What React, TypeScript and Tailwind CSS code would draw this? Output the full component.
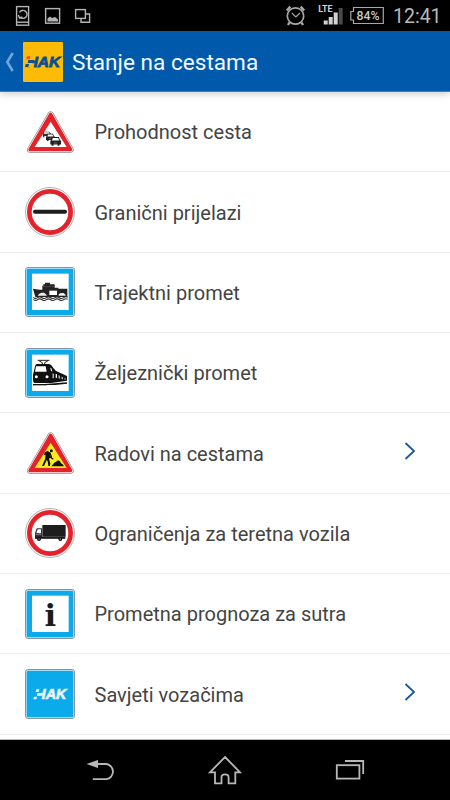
import React, { FC, ReactNode } from "react";

interface MenuItem {
  label: string;
  icon: ReactNode;
  hasArrow?: boolean;
}

interface SignProps {
  children?: ReactNode;
}

const Sign: FC<SignProps> = ({ children }) => (
  <svg viewBox="0 0 150 150" className="h-[50px] w-[50px] shrink-0">
    {children}
  </svg>
);

const TriangleSign: FC<SignProps & { fill: string }> = ({ children, fill }) => (
  <Sign>
    <path d="M77 22 L137 128 H15 Z" fill="#fff" stroke="#8b8b8b" strokeWidth="18" strokeLinejoin="round" />
    <path d="M77 22 L137 128 H15 Z" fill="#fff" stroke="#fff" strokeWidth="14" strokeLinejoin="round" />
    <path d="M77 22 L137 128 H15 Z" fill="#e5212a" stroke="#e5212a" strokeWidth="10" strokeLinejoin="round" />
    <path d="M77 44 L125 120 H29 Z" fill={fill} />
    {children}
  </Sign>
);

const CircleSign: FC<SignProps> = ({ children }) => (
  <Sign>
    <circle cx="75" cy="75" r="73.5" fill="#fff" stroke="#8b8b8b" strokeWidth="2" />
    <circle cx="75" cy="75" r="62" fill="#fff" stroke="#e5212a" strokeWidth="14" />
    {children}
  </Sign>
);

const SquareSign: FC<SignProps & { solid?: boolean }> = ({ children, solid }) => (
  <Sign>
    <rect x="1.5" y="1.5" width="147" height="147" rx="8" fill="#d5edf8" stroke="#6f7f88" strokeWidth="2.5" />
    <rect x="5" y="5" width="140" height="140" rx="5" fill="#0baaea" />
    {!solid && <rect x="21" y="20" width="110" height="109" fill="#fff" />}
    {children}
  </Sign>
);

const Car: FC<{ transform: string }> = ({ transform }) => (
  <g transform={transform}>
    <path d="M5 0 H27 L31 11 H34 V24 H29 V28 H23 V24 H10 V28 H4 V24 H0 V11 H2 Z" fill="#222" />
    <path d="M8 3 H25 L28 11 H5 Z" fill="#fff" />
    <path d="M11 19 H22" stroke="#888" strokeWidth="2" />
  </g>
);

const TrafficIcon = () => (
  <TriangleSign fill="#fff">
    <path d="M53 80 L56 74 H72 L78 80 V87 H74 V91 H70 V87 H58 V91 H54 Z" fill="#333" />
    <path d="M57 76 H71 L75 80 H56 Z" fill="#fff" />
    <Car transform="translate(63 80) scale(.78)" />
    <Car transform="translate(76 90) scale(.95)" />
  </TriangleSign>
);

const BorderIcon = () => (
  <CircleSign>
    <path d="M30 74 H120" stroke="#1d1d1d" strokeWidth="12" strokeLinecap="round" />
  </CircleSign>
);

const FerryIcon = () => (
  <SquareSign>
    <path d="M24 65 L44 68 H52 V56 H55 V52 H60 V47 H75 V52 H89 V62 H100 V65 H127 V90 H31 Z" fill="#222" />
    <path d="M55 59 H87" stroke="#555" strokeWidth="2" />
    <rect x="73" y="71" width="23" height="13" fill="#fff" />
    <path d="M38 86 L42 81 L49 77 H57 L62 81 L66 86 Z" fill="#eee" />
    <path d="M101 86 V82 L107 78 H116 L122 84 V86 Z" fill="#eee" />
    <path
      d="M25 91 Q32 97 38 92 T51 92 T64 92 T77 92 T90 92 T103 92 T116 92 T128 91 M25 97 Q32 103 38 98 T51 98 T64 98 T77 98 T90 98 T103 98 T116 98 T128 97"
      fill="none"
      stroke="#333"
      strokeWidth="3.5"
    />
  </SquareSign>
);

const TrainIcon = () => (
  <SquareSign>
    <path d="M38 37 H73 M42 38 L53 45 L50 49 M69 38 L58 45 L61 49" fill="none" stroke="#222" strokeWidth="3" />
    <path d="M31 52 Q32 48 38 48 H72 Q79 49 83 57 L92 68 L126 84 V98 L79 105 H28 Q24 103 24 95 V80 Z" fill="#111" />
    <path d="M33 55 H62 L65 71 H30 Z" fill="#fff" />
    <circle cx="34" cy="86" r="4.5" fill="#fff" />
    <circle cx="66" cy="86" r="4.5" fill="#fff" />
    <path d="M76 59 L79 60 L82 70 H78 Z M83 76 L86 77 V91 L83 90 Z M92 78 L96 79 V90 L92 89 Z M101 82 L104 83 V92 L101 91 Z M110 86 L113 87 V94 L110 93 Z M119 89 L121 90 V95 L119 95 Z" fill="#fff" />
    <path d="M24 110 H66" fill="none" stroke="#111" strokeWidth="4" />
    <path d="M48 109 L90 106 L126 103 V107 L90 111 H60 Z" fill="#111" />
  </SquareSign>
);

const RoadworksIcon = () => (
  <TriangleSign fill="#fbec21">
    <circle cx="79" cy="68" r="4.5" fill="#111" />
    <path d="M59 73 L68 69 L77 74 L77 86 L72 93 L76 106 L75 114 H70 L68 100 L65 96 L57 114 H51 L60 94 L62 79 L57 82 Z" fill="#111" />
    <path d="M61 77 L85 94 M76 77 L80 88" stroke="#111" strokeWidth="3.5" fill="none" />
    <path d="M79 115 L88 104 L93 101 L99 97 L105 100 L108 106 L113 109 L117 115 Z" fill="#111" />
  </TriangleSign>
);

const TruckIcon = () => (
  <CircleSign>
    <rect x="52" y="51" width="70" height="35" fill="#1d1d1d" />
    <path d="M30 90 V75 L35 61 H51 V90 Z" fill="#333" />
    <path d="M34 75 L38 64 H48 V76 Z" fill="#fff" />
    <path d="M32 79 H48" stroke="#aaa" strokeWidth="2" />
    <path d="M30 89 H121" stroke="#1d1d1d" strokeWidth="7" />
    <circle cx="42" cy="93" r="6" fill="#111" />
    <circle cx="106" cy="93" r="6" fill="#111" />
    <circle cx="42" cy="93" r="2" fill="#999" />
    <circle cx="106" cy="93" r="2" fill="#999" />
  </CircleSign>
);

const InfoIcon = () => (
  <SquareSign>
    <text x="76" y="111" textAnchor="middle" fill="#1b1b1b" className="font-['DejaVu_Serif',serif] text-[92px] font-bold">
      i
    </text>
  </SquareSign>
);

const AdviceIcon = () => (
  <SquareSign solid>
    <text x="31" y="91" textLength="93" lengthAdjust="spacingAndGlyphs" fill="#e9f6fd" stroke="#e9f6fd" strokeWidth="2" className="font-['Liberation_Sans',sans-serif] text-[42px] font-bold italic">
      HAK
    </text>
    <path d="M30 58 H50 L48 73 H38 L37 80 H44 L42 93 H26 Z" fill="#0baaea" />
    <path d="M34 61 H43 L41 69 H32 Z M38 72 H52 L51 80 H36 Z M27 83 H36 L34 91 H25 Z" fill="#e9f6fd" />
  </SquareSign>
);

const HakLogo = () => (
  <svg viewBox="0 0 120 120" className="h-10 w-10 shrink-0">
    <rect width="120" height="120" rx="3" fill="#fdbb05" />
    <text x="11" y="75" textLength="101" lengthAdjust="spacingAndGlyphs" fill="#0b4f94" stroke="#0b4f94" strokeWidth="2.5" className="font-['Liberation_Sans',sans-serif] text-[44px] font-bold italic">
      HAK
    </text>
    <path d="M10 40 H31 L25 77 H6 Z" fill="#fdbb05" />
    <path d="M12 43 H22 L20 52 H10 Z" fill="#f04d23" />
    <path d="M16 54 H33 L31 63 H14 Z M8 66 H18 L16 75 H6 Z" fill="#0b4f94" />
  </svg>
);

const menuItems: MenuItem[] = [
  { label: "Prohodnost cesta", icon: <TrafficIcon /> },
  { label: "Granični prijelazi", icon: <BorderIcon /> },
  { label: "Trajektni promet", icon: <FerryIcon /> },
  { label: "Željeznički promet", icon: <TrainIcon /> },
  { label: "Radovi na cestama", icon: <RoadworksIcon />, hasArrow: true },
  { label: "Ograničenja za teretna vozila", icon: <TruckIcon /> },
  { label: "Prometna prognoza za sutra", icon: <InfoIcon /> },
  { label: "Savjeti vozačima", icon: <AdviceIcon />, hasArrow: true },
];

const StatusBar = () => (
  <div className="flex h-[31px] shrink-0 items-center justify-between bg-black text-[#b9b9b9]">
    <svg viewBox="0 0 100 31" className="h-[31px] w-[100px]" fill="none" stroke="#b4b4b4" strokeWidth="1.4">
      <rect x="16.6" y="6.6" width="12" height="18.6" />
      <path d="M17 22.2 H28.5" />
      <path d="M19.5 12.5 A4 4 0 1 1 20 17 M18.3 15 L19.6 18 L22.4 16.8" />
      <rect x="45.6" y="8.6" width="14" height="14.6" />
      <path d="M47.5 21.5 V18.5 L50 16.5 L52 18 L55 17 L58 19.5 V21.5 Z" fill="#b4b4b4" stroke="none" />
      <path d="M86 14 H89.6 V22.3 H81 V19" />
      <rect x="75.6" y="9.6" width="9.8" height="8.8" />
    </svg>
    <div className="flex items-center">
      <svg viewBox="0 0 108 31" className="h-[31px] w-[108px]" fill="none">
        <g stroke="#a8a8a8" strokeWidth="1.7">
          <circle cx="11.5" cy="16" r="8.2" />
          <path d="M11.8 17 L7.8 12.8 M11.8 17 L16 13" strokeWidth="1.2" />
          <path d="M2.8 10.5 L6.3 6.6 M16.7 6.6 L20.2 10.5 M5.5 22.5 L4 25 M17.5 22.5 L19 25" strokeWidth="2.4" />
        </g>
        <text x="34.3" y="11.8" fill="#d2d2d2" textLength="14.3" lengthAdjust="spacingAndGlyphs" className="font-['Roboto',sans-serif] text-[9.5px] font-bold">
          LTE
        </text>
        <path d="M39.7 20.5 H43.7 V24.5 H39.7 Z M44.7 17 H48.7 V24.5 H44.7 Z M49.7 12.5 H53.7 V24.5 H49.7 Z" fill="#d2d2d2" />
        <path d="M54.7 8 H58.7 V24.5 H54.7 Z" fill="#4a4a4a" />
        <path d="M69.5 7.5 H99.3 V23.5 H69.5 V20 H66.8 V11.5 H69.5 Z" stroke="#a8a8a8" strokeWidth="1.2" />
        <text x="72.5" y="20" fill="#c9c9c9" textLength="23" lengthAdjust="spacingAndGlyphs" className="font-['Roboto',sans-serif] text-[12.5px] font-medium">
          84%
        </text>
      </svg>
      <span className="w-[58px] pt-[3px] pl-px font-['Roboto',sans-serif] text-[19.5px] leading-none">12:41</span>
    </div>
  </div>
);

const Header = () => (
  <header className="relative z-10 flex h-[61px] shrink-0 items-center border-b border-[#3f7fc0] bg-[#0059ab] pt-px shadow-[0_2px_7px_rgba(0,0,0,0.2)]">
    <svg viewBox="0 0 23 40" className="h-10 w-[23px] shrink-0" fill="none" stroke="#6fa5db" strokeWidth="2.6">
      <path d="M12.7 11 L7.3 20 L12.7 29" />
    </svg>
    <HakLogo />
    <h1 className="ml-[9px] whitespace-nowrap pt-[2px] text-[22.6px] text-[#f2f8fd]">Stanje na cestama</h1>
  </header>
);

const MenuRow: FC<{ item: MenuItem }> = ({ item }) => (
  <li className="flex h-[80.35px] shrink-0 items-center border-b-[1.5px] border-[#ececec] pl-[25px]">
    {item.icon}
    <span className="ml-[19.5px] whitespace-nowrap pt-px text-xl text-[#444]">{item.label}</span>
    {item.hasArrow && (
      <svg viewBox="0 0 14 20" className="mr-[33px] mb-1 ml-auto h-5 w-3.5" fill="none" stroke="#1a5799" strokeWidth="1.8">
        <path d="M2.5 2 L11 10 L2.5 18" />
      </svg>
    )}
  </li>
);

const NavBar = () => (
  <nav className="flex h-[60px] shrink-0 bg-black">
    <svg viewBox="0 0 450 60" className="h-[60px] w-[450px]" fill="none" stroke="#b8b8b8" strokeWidth="1.8">
      <path d="M96 24 H106.5 A7.7 7.7 0 0 1 106.5 39.2 H92.8" />
      <path d="M86.5 24 L98 20 V28 Z" fill="#b8b8b8" stroke="none" />
      <path d="M225 17 L240 32.3 H235.3 V43.3 H228.6 V37.5 Q228.6 34.3 225 34.3 Q221.5 34.3 221.5 37.5 V43.3 H215 V32.3 H210 Z" />
      <rect x="336.8" y="25.2" width="22.6" height="13.4" />
      <path d="M345 21 H363.2 V34" />
    </svg>
  </nav>
);

const App: FC = () => {
  return (
    <div className="flex h-[800px] w-[450px] flex-col overflow-hidden bg-white font-['Roboto',sans-serif]">
      <StatusBar />
      <Header />
      <ul className="flex grow flex-col overflow-hidden border-b border-[#bbb]">
        {menuItems.map((item) => (
          <MenuRow key={item.label} item={item} />
        ))}
      </ul>
      <NavBar />
    </div>
  );
};

export default App;
